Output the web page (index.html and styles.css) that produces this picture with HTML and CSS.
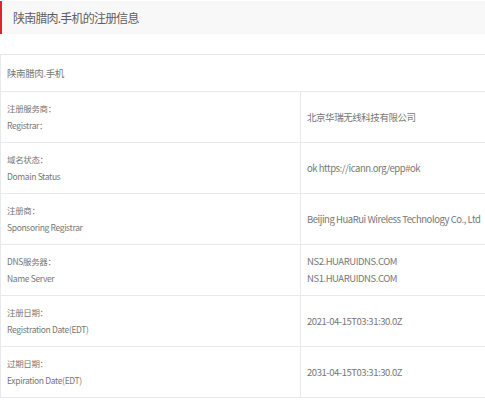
FILE: index.html
```html
<!DOCTYPE html>
<html lang="zh-CN">
<head>
<meta charset="utf-8">
<title>陕南腊肉.手机的注册信息</title>
<link rel="stylesheet" href="styles.css">
</head>
<body>
<div class="page">
  <div class="title-bar">陕南腊肉.手机的注册信息</div>
  <table class="info">
    <tr><td class="domain" colspan="2">陕南腊肉.手机</td></tr>
    <tr><td class="label"><div>注册服务商：</div><div>Registrar：</div></td><td class="value">北京华瑞无线科技有限公司</td></tr>
    <tr><td class="label"><div>域名状态：</div><div>Domain Status</div></td><td class="value">ok https://icann.org/epp#ok</td></tr>
    <tr><td class="label"><div>注册商：</div><div>Sponsoring Registrar</div></td><td class="value">Beijing HuaRui Wireless Technology Co., Ltd</td></tr>
    <tr><td class="label"><div>DNS服务器：</div><div>Name Server</div></td><td class="value"><div>NS2.HUARUIDNS.COM</div><div>NS1.HUARUIDNS.COM</div></td></tr>
    <tr><td class="label"><div>注册日期：</div><div>Registration Date(EDT)</div></td><td class="value">2021-04-15T03:31:30.0Z</td></tr>
    <tr><td class="label"><div>过期日期：</div><div>Expiration Date(EDT)</div></td><td class="value">2031-04-15T03:31:30.0Z</td></tr>
  </table>
</div>
</body>
</html>
```

FILE: styles.css
```css
html, body {
  margin: 0;
  padding: 0;
  background: #fff;
}
body {
  font-family: "Noto Sans CJK SC", "Noto Sans", sans-serif;
  font-weight: 400;
  color: #777;
}
.page {
  width: 485px;
  overflow: hidden;
  padding-top: 1px;
}
.title-bar {
  height: 33px;
  line-height: 33px;
  background: #f8f8f8;
  border-left: 2px solid #d9262c;
  padding-left: 11px;
  font-size: 12px;
  letter-spacing: -0.8px;
  color: #5f5f5f;
}
.info {
  margin-top: 20px;
  width: 520px;
  border-collapse: collapse;
  border: 1px solid #e6eaec;
}
.info td {
  border: 1px solid #e6eaec;
  padding: 0 6px;
  white-space: nowrap;
  vertical-align: middle;
}
.info .domain {
  height: 36px;
  font-size: 9.5px;
  letter-spacing: -0.4px;
}
.info .label {
  width: 287px;
  height: 50px;
  font-size: 8.5px;
  letter-spacing: -0.35px;
  line-height: 17px;
}
.info .value {
  font-size: 9.5px;
  letter-spacing: -0.45px;
  line-height: 17px;
}
```
